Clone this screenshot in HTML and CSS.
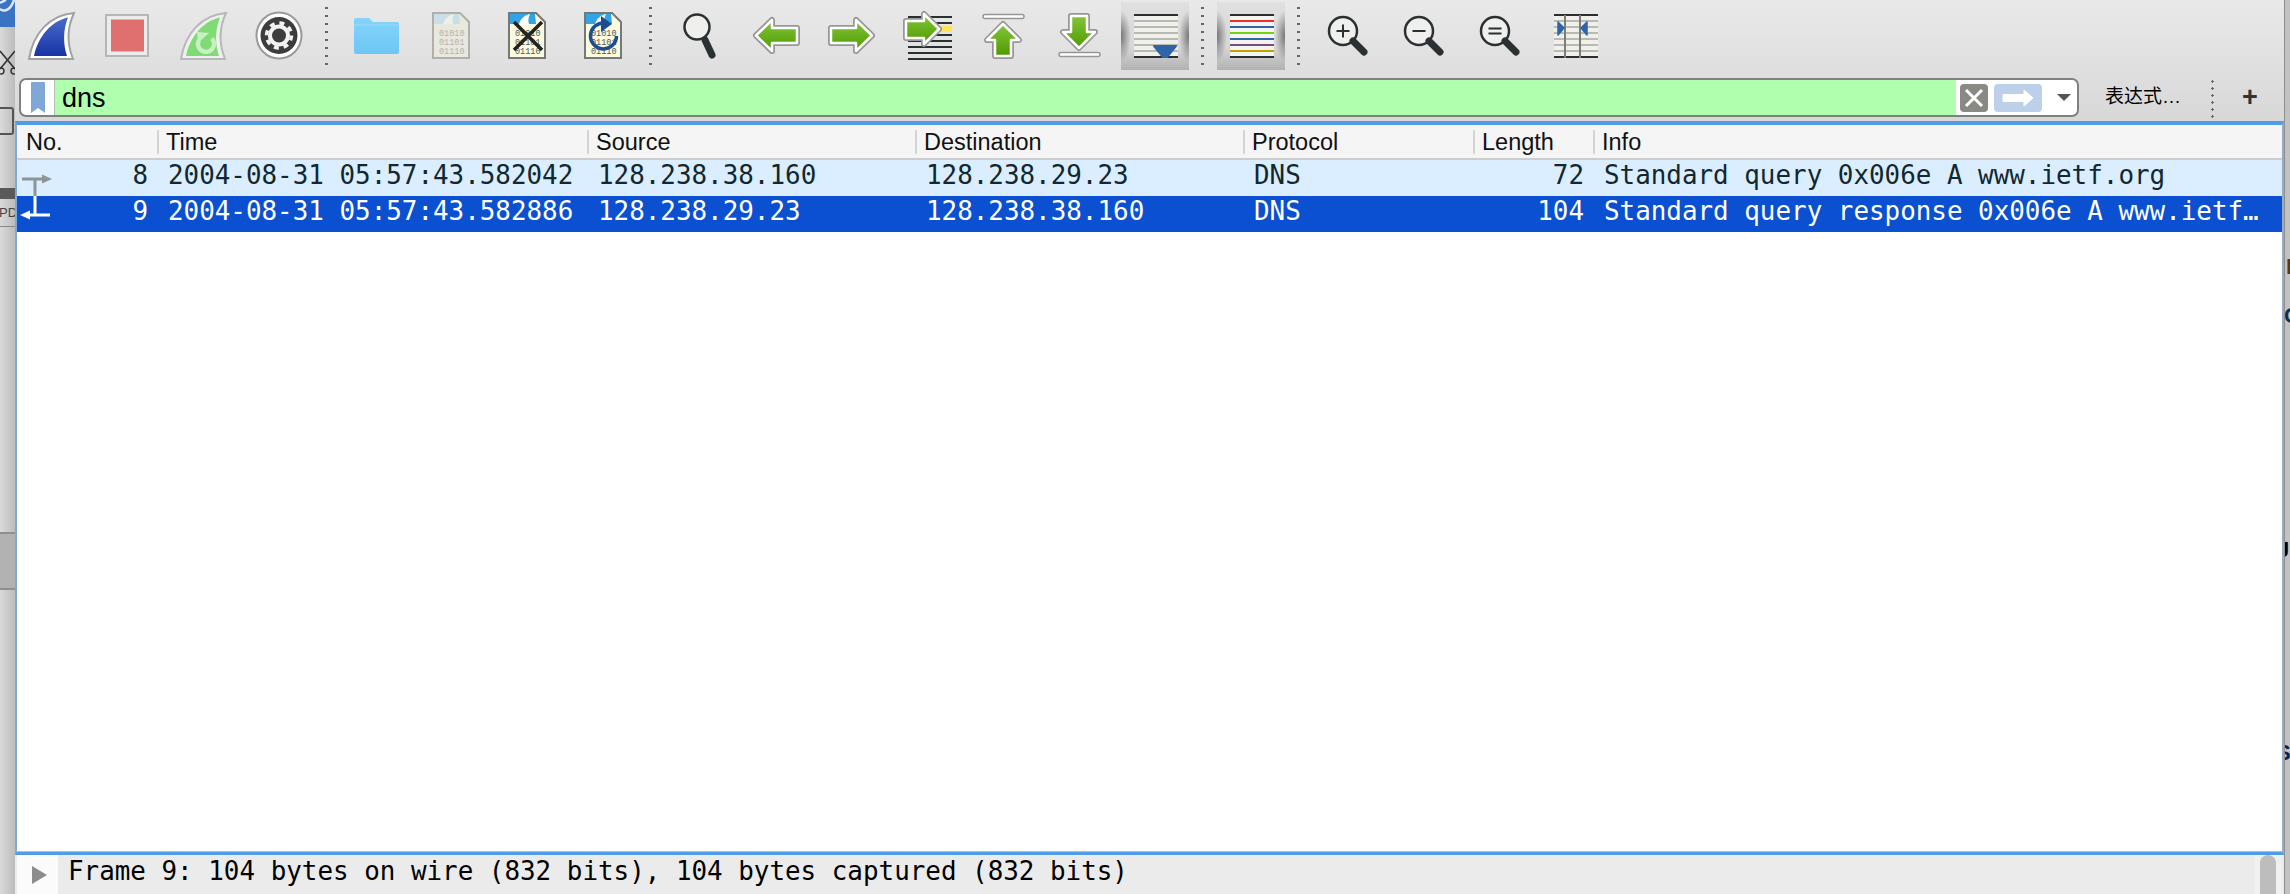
FILE: index.html
```html
<!DOCTYPE html>
<html lang="zh">
<head>
<meta charset="utf-8">
<title>Wireshark</title>
<link rel="stylesheet" href="styles.css">
</head>
<body>
<svg class="defs" aria-hidden="true">
  <defs>
    <linearGradient id="gBlue" x1="0" y1="0" x2="0" y2="1"><stop offset="0" stop-color="#4a6bc9"/><stop offset="1" stop-color="#1733a6"/></linearGradient>
    <linearGradient id="gGreen" x1="0" y1="0" x2="0" y2="1"><stop offset="0" stop-color="#84c63a"/><stop offset="1" stop-color="#4f9a02"/></linearGradient>
    <linearGradient id="gFolder" x1="0" y1="0" x2="0" y2="1"><stop offset="0" stop-color="#83d4fb"/><stop offset="1" stop-color="#6ec6f3"/></linearGradient>
  </defs>
</svg>
<div class="screen">
  <div class="desk desk-left">
    <div class="desk-blue">
      <svg class="desk-svg" width="15" height="27" viewBox="0 0 15 27"><path d="M0 9 C5 13 11 9 14 0 M0 3 L6 0" fill="none" stroke="#dfe8f5" stroke-width="2.5"/></svg>
    </div>
    <svg class="desk-svg desk-cut" width="15" height="40" viewBox="0 0 15 40"><path d="M0 6 L15 24 M15 6 L0 24" stroke="#333" stroke-width="1.6" fill="none"/><circle cx="1" cy="26" r="3" fill="none" stroke="#333" stroke-width="1.4"/><circle cx="14" cy="26" r="3" fill="none" stroke="#333" stroke-width="1.4"/></svg>
    <div class="desk-box"></div>
    <div class="desk-dark"></div>
    <div class="desk-label">PDI</div>
    <div class="desk-rule"></div>
    <div class="desk-block"></div>
  </div>

  <main class="window">
    <div class="toolbar">
      <div class="tb"><svg width="68" height="68" viewBox="0 0 68 68"><path d="M12 57 C16 32 32 13 57 11 C50 26 50 42 56 57 Z" fill="#fff" stroke="#a2a2a2" stroke-width="2"/><path d="M17 54 C21 35 34 19 51 15.500 C46 28 46 42 50 54 Z" fill="url(#gBlue)"/></svg></div>
      <div class="tb"><svg width="68" height="68" viewBox="0 0 68 68"><rect x="13" y="13" width="42" height="41" fill="#ececec" stroke="#b6b6b6" stroke-width="2"/><rect x="18" y="17.500" width="33" height="32" fill="#e07070"/></svg></div>
      <div class="tb"><svg width="68" height="68" viewBox="0 0 68 68"><path d="M12 57 C16 32 32 13 57 11 C50 26 50 42 56 57 Z" fill="#efefef" stroke="#b8b8b8" stroke-width="2"/><path d="M17 54 C21 35 34 19 51 15.500 C46 28 46 42 50 54 Z" fill="#7fdc74"/><path d="M43 36.500 A8 8 0 1 1 30 38" fill="none" stroke="#c9f0c2" stroke-width="4.500"/><path d="M28 30 L40 31 L29 41 Z" fill="#c9f0c2"/></svg></div>
      <div class="tb"><svg width="68" height="68" viewBox="0 0 68 68"><ellipse cx="34" cy="33.500" rx="22.500" ry="23" fill="#fff" stroke="#9a9a9a" stroke-width="2"/><circle cx="34" cy="33.500" r="18.500" fill="#3d3d3d"/><circle cx="34" cy="33.500" r="9" fill="none" stroke="#f2f2f2" stroke-width="4"/><circle cx="34" cy="33.500" r="12.500" fill="none" stroke="#f2f2f2" stroke-width="3.500" stroke-dasharray="5 4.820"/></svg></div>
      <div class="tb-sep"></div>
      <div class="tb"><svg width="68" height="68" viewBox="0 0 68 68"><path d="M13 50 V18 Q13 16 15 16 H28 L32 20 H56 Q58 20 58 22 V50 Q58 52 56 52 H15 Q13 52 13 50 Z" fill="url(#gFolder)"/><path d="M13 23 H58" stroke="#9adcfb" stroke-width="1"/></svg></div>
      <div class="tb"><svg width="68" height="68" viewBox="0 0 68 68"><path d="M16 11 H43 L52 20 V56 H16 Z" fill="#e8e8de" stroke="#b0b0a8" stroke-width="2"/><path d="M17 12 H42 L43 22 H17 Z" fill="#c8dfe9"/><path d="M26 22 C28 16 32 13 37 12 C35 16 35 19 36 22 Z" fill="#eeeeea"/><text class="bits bits-pale" x="22" y="34">01010</text><text class="bits bits-pale" x="22" y="43">01101</text><text class="bits bits-pale" x="22" y="52">01110</text></svg></div>
      <div class="tb"><svg width="68" height="68" viewBox="0 0 68 68"><path d="M16 11 H43 L52 20 V56 H16 Z" fill="#fbfbe0" stroke="#777" stroke-width="2"/><path d="M17 12 H42 L43 22 H17 Z" fill="#2fa4e6"/><path d="M26 22 C28 16 32 13 37 12 C35 16 35 19 36 22 Z" fill="#fff"/><text class="bits" x="22" y="34">01010</text><text class="bits" x="22" y="43">01101</text><text class="bits" x="22" y="52">01110</text><path d="M21 20 L49 48 M49 20 L21 48" stroke="#222" stroke-width="3.500"/></svg></div>
      <div class="tb"><svg width="68" height="68" viewBox="0 0 68 68"><path d="M16 11 H43 L52 20 V56 H16 Z" fill="#fbfbe0" stroke="#777" stroke-width="2"/><path d="M17 12 H42 L43 22 H17 Z" fill="#2fa4e6"/><path d="M26 22 C28 16 32 13 37 12 C35 16 35 19 36 22 Z" fill="#fff"/><text class="bits" x="22" y="34">01010</text><text class="bits" x="22" y="43">01101</text><text class="bits" x="22" y="52">01110</text><path d="M36 21 A13 13 0 1 0 47.500 34" fill="none" stroke="#1d4d8f" stroke-width="3.500"/><path d="M32 14 L43 22 L32 30 Z" fill="#1d4d8f"/></svg></div>
      <div class="tb-sep"></div>
      <div class="tb"><svg width="68" height="68" viewBox="0 0 68 68"><ellipse cx="32" cy="25" rx="12.500" ry="12.500" fill="#efefed" stroke="#2b3133" stroke-width="2.500"/><path d="M40 38 L47 53" stroke="#2b3133" stroke-width="7" stroke-linecap="round"/></svg></div>
      <div class="tb"><svg width="68" height="68" viewBox="0 0 68 68"><path class="aro" d="M15 33.500 L31 18 V26 H56 V41 H31 V49 Z"/><path class="ari" d="M15 33.500 L31 18 V26 H56 V41 H31 V49 Z"/></svg></div>
      <div class="tb"><svg width="68" height="68" viewBox="0 0 68 68"><path class="aro" d="M55 33.500 L39 18 V26 H14 V41 H39 V49 Z"/><path class="ari" d="M55 33.500 L39 18 V26 H14 V41 H39 V49 Z"/></svg></div>
      <div class="tb"><svg width="68" height="68" viewBox="0 0 68 68"><path d="M15 15 H59 M15 21 H59 M15 33 H59 M15 39 H59 M15 45 H59 M15 51 H59 M15 57 H59" stroke="#2a2f31" stroke-width="2"/><rect x="46" y="24" width="13" height="6" fill="#fde35c"/><path class="aro" d="M46 27 L31 12 V19 H13 V36 H31 V42 Z"/><path class="ari" d="M46 27 L31 12 V19 H13 V36 H31 V42 Z"/></svg></div>
      <div class="tb"><svg width="68" height="68" viewBox="0 0 68 68"><rect x="14" y="12.500" width="41" height="4" rx="2" fill="#fff" stroke="#969696" stroke-width="1.500"/><path class="aro" d="M34 22 L50 38 H42 V54 H26 V38 H18 Z"/><path class="ari" d="M34 22 L50 38 H42 V54 H26 V38 H18 Z"/></svg></div>
      <div class="tb"><svg width="68" height="68" viewBox="0 0 68 68"><rect x="14" y="50.500" width="41" height="4" rx="2" fill="#fff" stroke="#969696" stroke-width="1.500"/><path class="aro" d="M34 46 L18 30 H26 V14 H42 V30 H50 Z"/><path class="ari" d="M34 46 L18 30 H26 V14 H42 V30 H50 Z"/></svg></div>
      <div class="tb tb-on"><svg width="68" height="68" viewBox="0 0 68 68"><rect x="13" y="13" width="44" height="42" fill="#efefeb"/><path d="M13 19 H57 M13 25 H57 M13 31 H57 M13 37 H57 M13 43 H57 M13 49 H57" stroke="#b9bab0" stroke-width="2"/><path d="M13 13 H57 M13 55 H57" stroke="#2a2f31" stroke-width="2"/><path d="M33 44 H55 L46 55 H42 Z" fill="#2f65a8" stroke="#2f65a8" stroke-linejoin="round" stroke-width="2"/></svg></div>
      <div class="tb-sep"></div>
      <div class="tb tb-on"><svg width="68" height="68" viewBox="0 0 68 68"><rect x="13" y="13" width="44" height="42" fill="#f4f4f2"/><path d="M13 13 H57" stroke="#2a2f31" stroke-width="2"/><path d="M13 19 H57" stroke="#ee2c2c" stroke-width="2"/><path d="M13 25 H57" stroke="#2f65a8" stroke-width="2"/><path d="M13 31 H57" stroke="#73d216" stroke-width="2"/><path d="M13 37 H57" stroke="#3465a4" stroke-width="2"/><path d="M13 43 H57" stroke="#75507b" stroke-width="2"/><path d="M13 49 H57" stroke="#c4a000" stroke-width="2"/><path d="M13 55 H57" stroke="#2a2f31" stroke-width="2"/></svg></div>
      <div class="tb-sep"></div>
      <div class="tb"><svg width="68" height="68" viewBox="0 0 68 68"><circle cx="30" cy="29" r="14" fill="#efefed" stroke="#2b3133" stroke-width="2.500"/><path d="M40 39 L51 50" stroke="#2b3133" stroke-width="7" stroke-linecap="round"/><path d="M23.500 29 H36.500 M30 22.500 V35.500" stroke="#2b3133" stroke-width="2"/></svg></div>
      <div class="tb"><svg width="68" height="68" viewBox="0 0 68 68"><circle cx="30" cy="29" r="14" fill="#efefed" stroke="#2b3133" stroke-width="2.500"/><path d="M40 39 L51 50" stroke="#2b3133" stroke-width="7" stroke-linecap="round"/><path d="M23.500 29 H36.500" stroke="#2b3133" stroke-width="2"/></svg></div>
      <div class="tb"><svg width="68" height="68" viewBox="0 0 68 68"><circle cx="30" cy="29" r="14" fill="#efefed" stroke="#2b3133" stroke-width="2.500"/><path d="M40 39 L51 50" stroke="#2b3133" stroke-width="7" stroke-linecap="round"/><path d="M23.500 26.500 H36.500 M23.500 31.500 H36.500" stroke="#2b3133" stroke-width="2"/></svg></div>
      <div class="tb"><svg width="68" height="68" viewBox="0 0 68 68"><rect x="13" y="13" width="44" height="42" fill="#efefeb"/><path d="M13 19 H57 M13 25 H57 M13 31 H57 M13 37 H57 M13 43 H57 M13 49 H57" stroke="#b9bab0" stroke-width="2"/><path d="M13 13 H57 M13 55 H57" stroke="#2a2f31" stroke-width="2"/><path d="M24 13 V56 M39 13 V56" stroke="#7e7e78" stroke-width="2"/><path d="M17 20 L23 26 L17 33 Z M46 20 L40 26 L46 33 Z" fill="#2f65a8" stroke="#2f65a8" stroke-width="1.500" stroke-linejoin="round"/></svg></div>
    </div>

    <div class="filterbar">
      <div class="filter">
        <div class="bookmark"><svg width="22" height="34" viewBox="0 0 22 34"><path d="M4 2 Q4 1 5 1 H17 Q18 1 18 2 V32 L11 27 L4 32 Z" fill="#7fa8d6"/></svg></div>
        <div class="filter-input">dns</div>
        <div class="filter-tools">
          <div class="btn-clear"><svg width="20" height="20" viewBox="0 0 20 20"><path d="M2 2 L18 18 M18 2 L2 18" stroke="#fff" stroke-width="3"/></svg></div>
          <div class="btn-apply"><svg width="34" height="18" viewBox="0 0 34 18"><path d="M2 5.500 H23 V1 L32 9 L23 17 V12.500 H2 Z" fill="#fff" stroke="#fff" stroke-linejoin="round"/></svg></div>
          <div class="caret"></div>
        </div>
      </div>
      <div class="expr">表达式…</div>
      <div class="fsep"></div>
      <div class="plus">+</div>
    </div>

    <section class="packets">
      <div class="cols head">
        <div class="h">No.</div>
        <div class="h">Time</div>
        <div class="h">Source</div>
        <div class="h">Destination</div>
        <div class="h">Protocol</div>
        <div class="h">Length</div>
        <div class="h">Info</div>
      </div>
      <div class="cols row row-dns">
        <div class="c c-no"><svg class="rel" width="40" height="36" viewBox="0 0 40 36"><path d="M5 19 H26 M18 19 V36" stroke="#8e9498" stroke-width="3" fill="none"/><path d="M25 14.500 L35 19 L25 23.500 Z" fill="#8e9498"/></svg><span>8</span></div>
        <div class="c">2004-08-31 05:57:43.582042</div>
        <div class="c">128.238.38.160</div>
        <div class="c">128.238.29.23</div>
        <div class="c">DNS</div>
        <div class="c c-len">72</div>
        <div class="c">Standard query 0x006e A www.ietf.org</div>
      </div>
      <div class="cols row row-sel">
        <div class="c c-no"><svg class="rel" width="40" height="36" viewBox="0 0 40 36"><path d="M18 0 V19 M33 19 H8" stroke="#fff" stroke-width="3" fill="none"/><path d="M13 14.500 L3 19 L13 23.500 Z" fill="#fff"/></svg><span>9</span></div>
        <div class="c">2004-08-31 05:57:43.582886</div>
        <div class="c">128.238.29.23</div>
        <div class="c">128.238.38.160</div>
        <div class="c">DNS</div>
        <div class="c c-len">104</div>
        <div class="c">Standard query response 0x006e A www.ietf…</div>
      </div>
    </section>

    <div class="details">
      <div class="expander"><div class="tri"></div></div>
      <div class="detail-text">Frame 9: 104 bytes on wire (832 bits), 104 bytes captured (832 bits)</div>
      <div class="vscroll"><div class="thumb"></div></div>
    </div>
  </main>

  <div class="desk desk-right">
    <span class="frag frag-1">L</span>
    <span class="frag frag-2">C</span>
    <span class="frag frag-3">J</span>
    <span class="frag frag-4">S</span>
  </div>
</div>
</body>
</html>
```
FILE: styles.css
```css
* { box-sizing: border-box; }
html, body { margin: 0; height: 100%; overflow: hidden; }
body { background: #c9c9c9; font-family: "Liberation Sans", "Noto Sans CJK SC", sans-serif; color: #000; }
.defs { position: absolute; width: 0; height: 0; }
.screen { display: flex; width: 2290px; height: 894px; }

/* desktop visible behind the window */
.desk { position: relative; flex: none; overflow: hidden; background: linear-gradient(90deg, #dadada, #bcbcbc); }
.desk-left { width: 15px; }
.desk-right { width: 6px; background: #c2c2c2; border-left: 1px solid #8d8d8d; }
.desk-blue { height: 27px; background: #3c72c4; }
.desk-svg { display: block; }
.desk-cut { margin-top: 18px; }
.desk-box { position: absolute; left: -6px; top: 107px; width: 20px; height: 28px; border: 2px solid #555; border-radius: 3px; }
.desk-dark { position: absolute; left: 0; top: 188px; width: 15px; height: 11px; background: #5a5a5a; }
.desk-label { position: absolute; left: -1px; top: 205px; font-size: 13px; color: #444; }
.desk-rule { position: absolute; left: 0; top: 226px; width: 15px; height: 1px; background: #888; }
.desk-block { position: absolute; left: 0; top: 532px; width: 15px; height: 58px; background: #b2b2b2; border-top: 2px solid #8f8f8f; border-bottom: 2px solid #8f8f8f; }
.frag { position: absolute; left: -1px; font: bold 22px "Liberation Sans", sans-serif; }
.frag-1 { top: 254px; color: #5a3a10; left: 1px; }
.frag-2 { top: 303px; color: #10304a; }
.frag-3 { top: 537px; left: -8px; color: #000; }
.frag-4 { top: 740px; left: -9px; color: #102050; }

/* window */
.window { flex: none; width: 2269px; height: 894px; display: flex; flex-direction: column; background: linear-gradient(#e9e9e9, #d7d7d7 125px); }

.toolbar { flex: none; height: 78px; display: flex; gap: 8px; padding: 2px 0 0 2px; }
.tb { flex: none; width: 68px; height: 68px; }
.tb svg { display: block; }
.tb-on { background:
  radial-gradient(ellipse 10px 26px at 0 50%, rgba(85,85,85,.75), rgba(85,85,85,0)),
  radial-gradient(ellipse 10px 26px at 100% 50%, rgba(85,85,85,.75), rgba(85,85,85,0)),
  linear-gradient(#e0e0e0, #d8d8d8 65%, #b2b2b2); }
.tb-sep { flex: none; width: 12px; height: 62px; margin-top: 2px; background-image: radial-gradient(circle, #666 1.2px, transparent 1.5px); background-size: 3px 8px; background-repeat: repeat-y; background-position: 4px 0; }
.bits { font: 8.500px "Liberation Mono", monospace; fill: #555; }
.bits-pale { fill: #b4b4ac; }
.aro { fill: none; stroke: #979797; stroke-width: 6; stroke-linejoin: round; }
.ari { fill: url(#gGreen); stroke: #fff; stroke-width: 2.500; stroke-linejoin: round; }

.filterbar { flex: none; height: 43px; display: flex; padding: 0 0 4px 4px; align-items: stretch; }
.filter { flex: none; width: 2060px; height: 39px; display: flex; border: 2px solid #808080; border-radius: 7px; background: #fff; overflow: hidden; }
.bookmark { flex: none; width: 34px; display: flex; align-items: center; justify-content: center; border-right: 1px solid #bbb; }
.filter-input { flex: 1; background: #afffaf; font: 27px/36px "Liberation Sans", sans-serif; padding-left: 7px; }
.filter-tools { flex: none; width: 121px; display: flex; align-items: center; padding-left: 4px; gap: 6px; }
.btn-clear { flex: none; width: 28px; height: 28px; background: #8a8a84; border-radius: 4px; display: flex; align-items: center; justify-content: center; }
.btn-apply { flex: none; width: 48px; height: 28px; background: #bcd1e9; border-radius: 4px; display: flex; align-items: center; justify-content: center; }
.caret { flex: none; margin-left: 9px; width: 0; height: 0; border-left: 7px solid transparent; border-right: 7px solid transparent; border-top: 7px solid #555; }
.expr { flex: none; width: 74px; margin-left: 26px; margin-top: 6px; font-size: 19px; line-height: 26px; white-space: nowrap; }
.fsep { flex: none; width: 3px; height: 40px; margin-left: 32px; background-image: radial-gradient(circle, #666 1.1px, transparent 1.4px); background-size: 3px 7px; background-repeat: repeat-y; }
.plus { flex: none; margin-left: 28px; font: bold 27px/39px "Liberation Sans", sans-serif; color: #333; }

/* packet list */
.packets { flex: 1; min-height: 0; background: #fff; border-top: 4px solid #4f9ce9; border-left: 2px solid #7fa9d9; border-right: 2px solid #96abc6; border-bottom: 3px solid #4f9ce9; box-shadow: inset 0 -1px 0 #bdbdbd; }
.cols { display: grid; grid-template-columns: 140px 430px 328px 328px 230px 120px 1fr; }
.head { height: 35px; align-items: center; background: #f5f5f5; border-bottom: 2px solid #cdcdcd; }
.h { height: 24px; font-size: 23.500px; line-height: 24px; padding-left: 7px; color: #111; border-left: 2px solid #d4d4d4; }
.h:first-child { border-left: 0; padding-left: 9px; }
.row { height: 36px; font: 25.900px/31px "DejaVu Sans Mono", monospace; white-space: pre; }
.row-dns { background: #daeeff; color: #12272e; }
.row-sel { background: #0b50d0; color: #fff; }
.c { padding-left: 11px; overflow: hidden; }
.c-no { display: flex; justify-content: space-between; padding: 0 9px 0 0; }
.c-len { text-align: right; padding: 0 9px 0 0; }
.rel { display: block; flex: none; }

/* details */
.details { flex: none; height: 39px; display: flex; background: #ebebeb; padding-left: 2px; }
.expander { flex: none; width: 41px; background: #fbfbfb; display: flex; align-items: center; justify-content: center; }
.tri { width: 0; height: 0; margin-left: 4px; border-top: 9px solid transparent; border-bottom: 9px solid transparent; border-left: 15px solid #8c8c8c; }
.detail-text { flex: 1; padding-left: 10px; font: 25.900px/33px "DejaVu Sans Mono", monospace; white-space: pre; }
.vscroll { flex: none; width: 28px; margin-right: 2px; background: #f0f0f0; padding: 0 6px; }
.thumb { height: 60px; background: #bdbdbd; border-radius: 8px 8px 0 0; }
```
